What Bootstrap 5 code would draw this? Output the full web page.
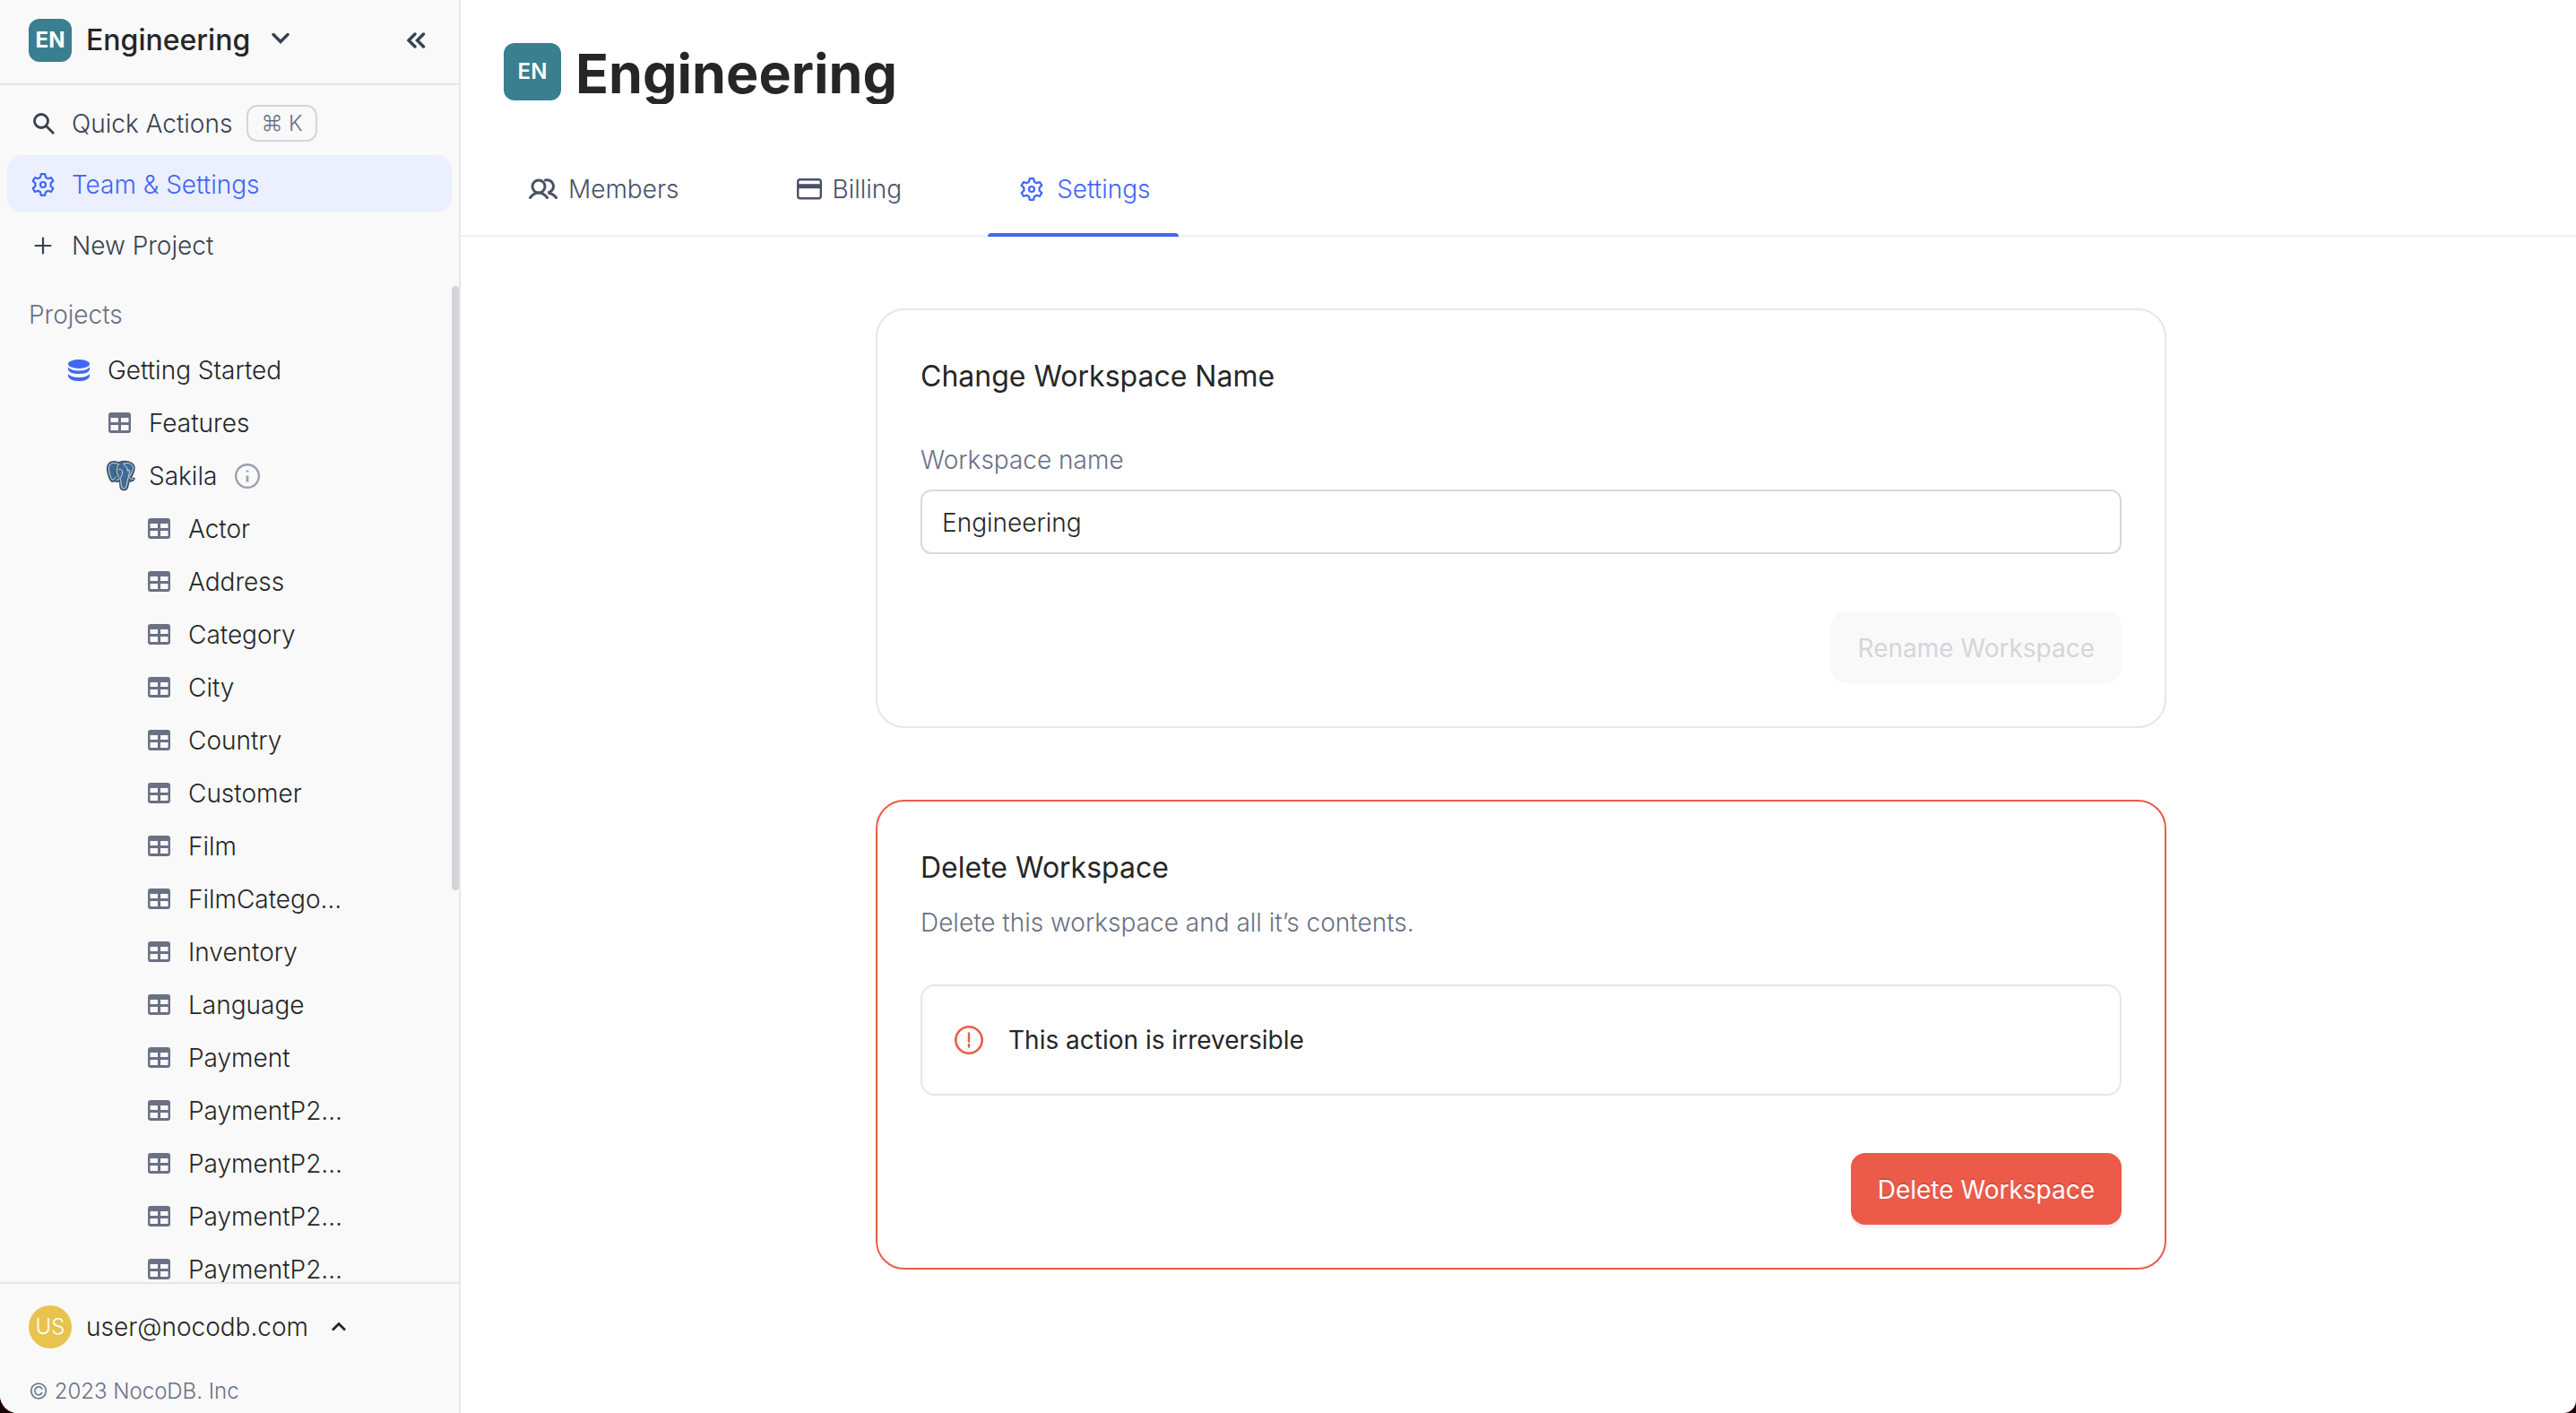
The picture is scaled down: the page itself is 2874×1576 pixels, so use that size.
<!DOCTYPE html>
<html lang="en">
<head>
<meta charset="utf-8">
<meta name="viewport" content="width=device-width, initial-scale=1">
<title>Engineering – Settings</title>
<link href="https://cdn.jsdelivr.net/npm/bootstrap@5.3.0/dist/css/bootstrap.min.css" rel="stylesheet">
<style>
  :root { --ink:#262626; --slate:#374151; --tab:#4a5268; --muted:#6a7184; --brand:#4166f5; --line:#e7e7e9; --danger:#ec5a4a; --teal:#3a7f8f; }
  body { font-family: Inter, "Liberation Sans", sans-serif; font-size: 28px; font-weight: 300; line-height: 44px; color: var(--ink); background: #1c0208; }
  a { text-decoration: none; color: inherit; }
  svg { flex: none; display: block; }
  .app-shell { background: #fff; border-radius: 0 0 14px 20px; overflow: hidden; }
  .side-pane { flex: 0 0 514px; background: #f9f9fa; border-right: 2px solid var(--line); }
  .side-head { height: 95px; padding: 0 32px 3px; border-bottom: 2px solid var(--line); }
  .plain-btn { background: none; border: 0; padding: 0; color: inherit; text-align: left; font-weight: inherit; }
  .tag-sq { width: 48px; height: 48px; border-radius: 12px; background: var(--teal); color: #fff; font-size: 24px; font-weight: 700; flex: none; }
  .tag-lg { width: 64px; height: 64px; font-weight: 600; }
  .tag-round { width: 48px; height: 48px; border-radius: 50%; background: #e8c34d; color: #fff; font-size: 24px; flex: none; }
  .ws-name { font-size: 32px; font-weight: 500; }
  .side-menu { padding: 10px 8px 14px; gap: 4px; color: var(--slate); }
  .side-link { height: 64px; padding: 1px 0 0 24px; border-radius: 16px; gap: 16px; }
  .side-link svg { width: 32px; }
  .side-link.active { background: #ebeffe; color: var(--brand); }
  .key-hint { height: 41px; padding: 0 14px; border: 2px solid #d5d5d9; border-radius: 12px; font-size: 24px; color: var(--muted); font-family: Inter, "DejaVu Sans", sans-serif; }
  .tree-pane { min-height: 0; flex: 1 1 0; overflow: hidden; }
  .tree-label { height: 64px; padding-left: 32px; color: var(--muted); }
  .tree-row { height: 59px; gap: 20px; white-space: nowrap; }
  .lvl-1 { padding-left: 76px; } .lvl-2 { padding-left: 121px; } .lvl-3 { padding-left: 165px; }
  .src-name { color: #1f293a; }
  .scroll-thumb { position: absolute; right: 0; top: 0; width: 8px; height: 674px; max-height: 100%; background: #d5d5d9; border-radius: 4px; }
  .side-foot { border-top: 2px solid var(--line); padding: 24px 32px 8px; }
  .copy-line { margin-top: 32px; font-size: 24px; line-height: 32px; color: var(--muted); }
  .page-head { padding: 48px 48px 0; gap: 16px; }
  .page-title { font-size: 61px; line-height: 68px; font-weight: 700; overflow: hidden; margin: 0; }
  .page-tabs { margin-top: 44px; padding-left: 40px; gap: 64px; border-bottom: 2px solid #f0f0f0; color: var(--tab); }
  .page-tab { height: 102px; padding: 0 32px; gap: 11px; position: relative; }
  .page-tab.active { color: var(--brand); }
  .page-tab.active::after { content: ""; position: absolute; left: 0; right: 0; bottom: -2px; height: 4px; background: var(--brand); border-radius: 4px 4px 0 0; }
  .page-body { padding: 80px 24px 48px 30px; gap: 80px; }
  .panel { width: 100%; max-width: 1440px; border: 2px solid var(--line); border-radius: 32px; padding: 48px; }
  .panel-danger { border-color: var(--danger); }
  .panel h2 { font-size: 32px; line-height: 48px; font-weight: 400; padding-top: 2px; margin: 0; }
  .field-label { color: var(--muted); margin: 47px 0 11px; display: block; }
  .panel .form-control { height: 72px; font-size: 28px; font-weight: 300; padding: 2px 22px 0; border: 2px solid #d9d9d9; border-radius: 12px; color: var(--ink); }
  .hint-text { margin: 15px 0 47px; color: var(--muted); }
  .warn-box { height: 124px; border: 2px solid var(--line); border-radius: 16px; padding: 0 36px; gap: 28px; font-weight: 400; }
  .act-btn { height: 80px; padding: 2px 30px 0; margin-top: 64px; border: 0; border-radius: 16px; font-size: 28px; font-weight: 400; }
  .act-btn:disabled { background: #f9f9fa; color: #d5d5d9; opacity: 1; }
  .act-danger, .act-danger:hover { background: var(--danger); color: #fff; box-shadow: 0 4px 0 #f3f3f3; text-shadow: 0 -2px 0 rgba(0,0,0,.12); }
</style>
<script src="https://cdn.jsdelivr.net/npm/bootstrap@5.3.0/dist/js/bootstrap.bundle.min.js"></script>
</head>
<body>
<svg width="0" height="0" class="position-absolute" aria-hidden="true">
  <symbol id="gear" viewBox="-13 -13 26 26"><g fill="none" stroke="currentColor" stroke-width="2.2" stroke-linejoin="round"><path d="M-2.2-11.8H2.2L3-8.3 5.6-6.8 9-8 11.3-4.1 8.6-1.6V1.6L11.3 4.1 9 8 5.6 6.8 3 8.3 2.2 11.8H-2.2L-3 8.3-5.6 6.8-9 8-11.3 4.1-8.6 1.6V-1.6L-11.3-4.1-9-8-5.6-6.8-3-8.3Z"/><circle r="3"/></g></symbol>
  <symbol id="grid" viewBox="0 0 25 23"><path fill="#6a7184" fill-rule="evenodd" d="M3 0H22Q25 0 25 3V20Q25 23 22 23H3Q0 23 0 20V3Q0 0 3 0ZM2.500 6V11H11V6ZM14 6V11H22.500V6ZM2.500 14V20H11V14ZM14 14V20H22.500V14Z"/></symbol>
</svg>

<div class="app-shell d-flex vh-100">
  <aside class="side-pane d-flex flex-column">
    <div class="side-head d-flex align-items-center justify-content-between">
      <button class="plain-btn d-flex align-items-center" type="button">
        <span class="tag-sq d-flex align-items-center justify-content-center me-3">EN</span>
        <span class="ws-name">Engineering</span>
        <svg class="ms-4" width="20" height="18" viewBox="0 0 20 18"><path d="M2 2.500 10 10.500 18 2.500" fill="none" stroke="#374151" stroke-width="3.400" stroke-linecap="round"/></svg>
      </button>
      <button class="plain-btn" type="button" aria-label="Collapse sidebar">
        <svg width="26" height="18" viewBox="0 0 26 18"><path d="M9 2 2 9 9 16M18.500 2 11.500 9 18.500 16" fill="none" stroke="#374151" stroke-width="3.400" stroke-linecap="round"/></svg>
      </button>
    </div>

    <nav class="side-menu d-flex flex-column">
      <a href="#" class="side-link d-flex align-items-center">
        <svg height="26" viewBox="0 0 32 26"><g fill="none" stroke="currentColor" stroke-width="2.800"><circle cx="14" cy="10" r="7.500"/><path d="M19.500 15.500 28 24"/></g></svg>
        <span>Quick Actions</span>
        <span class="key-hint d-flex align-items-center">⌘ K</span>
      </a>
      <a href="#" class="side-link active d-flex align-items-center"><svg height="26"><use href="#gear"/></svg><span>Team &amp; Settings</span></a>
      <a href="#" class="side-link d-flex align-items-center">
        <svg height="20" viewBox="0 0 32 20"><path d="M16 1.500V18.500M7.500 10H24.500" stroke="currentColor" stroke-width="2.200" stroke-linecap="round"/></svg>
        <span>New Project</span>
      </a>
    </nav>

    <div class="tree-pane position-relative">
      <div class="tree-label d-flex align-items-center">Projects</div>
      <div class="tree-row lvl-1 d-flex align-items-center">
        <svg width="24" height="26" viewBox="0 0 24 26"><g fill="var(--brand)"><ellipse cx="12" cy="6" rx="12" ry="5"/><path d="M0 9.500Q3 13.500 12 13.500T24 9.500V12.500Q22 17 12 17T0 12.500ZM0 17Q3 21 12 21T24 17V20Q22 25 12 25T0 20Z"/></g></svg>
        <span>Getting Started</span>
      </div>
      <div class="tree-row lvl-2 d-flex align-items-center"><svg width="25" height="23"><use href="#grid"/></svg><span>Features</span></div>
      <div class="tree-row lvl-2 d-flex align-items-center">
        <svg width="25" height="34" viewBox="2 0 25 34" overflow="visible">
          <g fill="#3f6a96" stroke="#44566a" stroke-width="1.600" stroke-linejoin="round">
            <path d="M13 2Q7-.5 3 2.500-.5 6 1 12 2.500 19 5 22.500 7 24.500 9.500 21.500L12 19Z"/>
            <path d="M13 2Q19 0 24 1 31 3 31 8 30.500 14 26.500 19.500L31 19.500Q30.500 22.500 25 23 24 26 23.500 29 22.500 33 18.500 32.500 15 32 15 27L14.500 22Q11.500 24 9 22.500L12 19Q8.500 15 10 9 10.500 4.500 13 2Z"/>
          </g>
          <g fill="none" stroke="#d9e1e8" stroke-width=".9" stroke-linecap="round">
            <path d="M12.500 3.500Q6.500 1 3.800 4 1.500 7 2.800 12 4 18 6 21 7.500 22 11 17.500M13.500 3.500Q10.500 7 11.300 12 12 17 14 18M14 9.500Q18 9 17.500 13 17.500 17 15 19.500 16 22 16.200 27 16.500 31 19 31 22 31 22.200 27L23.500 20Q27.500 15.500 29.500 9 30 4.500 24.500 2.700 21 2 18.500 3.200 23 6.500 24 11.500M23 10.500Q24.500 9.500 25.500 10.500 26 14 24 17.500 26 21 29.500 20.600M11 21.500Q13.500 21.800 14 19.500"/>
          </g>
        </svg>
        <span class="src-name">Sakila</span>
        <svg width="28" height="28" viewBox="0 0 28 28"><circle cx="14" cy="14" r="12.800" fill="none" stroke="#9aa1af" stroke-width="2.400"/><path d="M14 13.500V20.500M14 7.500V9.500" stroke="#9aa1af" stroke-width="2.800"/></svg>
      </div>
      <div class="tree-row lvl-3 d-flex align-items-center"><svg width="25" height="23"><use href="#grid"/></svg><span>Actor</span></div>
      <div class="tree-row lvl-3 d-flex align-items-center"><svg width="25" height="23"><use href="#grid"/></svg><span>Address</span></div>
      <div class="tree-row lvl-3 d-flex align-items-center"><svg width="25" height="23"><use href="#grid"/></svg><span>Category</span></div>
      <div class="tree-row lvl-3 d-flex align-items-center"><svg width="25" height="23"><use href="#grid"/></svg><span>City</span></div>
      <div class="tree-row lvl-3 d-flex align-items-center"><svg width="25" height="23"><use href="#grid"/></svg><span>Country</span></div>
      <div class="tree-row lvl-3 d-flex align-items-center"><svg width="25" height="23"><use href="#grid"/></svg><span>Customer</span></div>
      <div class="tree-row lvl-3 d-flex align-items-center"><svg width="25" height="23"><use href="#grid"/></svg><span>Film</span></div>
      <div class="tree-row lvl-3 d-flex align-items-center"><svg width="25" height="23"><use href="#grid"/></svg><span>FilmCatego…</span></div>
      <div class="tree-row lvl-3 d-flex align-items-center"><svg width="25" height="23"><use href="#grid"/></svg><span>Inventory</span></div>
      <div class="tree-row lvl-3 d-flex align-items-center"><svg width="25" height="23"><use href="#grid"/></svg><span>Language</span></div>
      <div class="tree-row lvl-3 d-flex align-items-center"><svg width="25" height="23"><use href="#grid"/></svg><span>Payment</span></div>
      <div class="tree-row lvl-3 d-flex align-items-center"><svg width="25" height="23"><use href="#grid"/></svg><span>PaymentP2…</span></div>
      <div class="tree-row lvl-3 d-flex align-items-center"><svg width="25" height="23"><use href="#grid"/></svg><span>PaymentP2…</span></div>
      <div class="tree-row lvl-3 d-flex align-items-center"><svg width="25" height="23"><use href="#grid"/></svg><span>PaymentP2…</span></div>
      <div class="tree-row lvl-3 d-flex align-items-center"><svg width="25" height="23"><use href="#grid"/></svg><span>PaymentP2…</span></div>
      <div class="scroll-thumb"></div>
    </div>

    <div class="side-foot">
      <button class="plain-btn d-flex align-items-center" type="button">
        <span class="tag-round d-flex align-items-center justify-content-center me-3">US</span>
        <span>user@nocodb.com</span>
        <svg class="ms-4" width="20" height="12" viewBox="0 0 20 12"><path d="M3 9.500 10 2.500 17 9.500" fill="none" stroke="#262626" stroke-width="2.800"/></svg>
      </button>
      <div class="copy-line">© 2023 NocoDB. Inc</div>
    </div>
  </aside>

  <main class="flex-grow-1 d-flex flex-column">
    <header class="page-head d-flex align-items-start">
      <span class="tag-sq tag-lg d-flex align-items-center justify-content-center">EN</span>
      <h1 class="page-title">Engineering</h1>
    </header>
    <nav class="page-tabs d-flex">
      <a href="#" class="page-tab d-flex align-items-center">
        <svg width="37" height="24" viewBox="-2 0 37 24"><g fill="none" stroke="currentColor" stroke-width="3" stroke-linecap="round"><circle cx="13" cy="9" r="7"/><path d="M3.500 21.500Q7.500 16 13 16T22.500 21.500M20.500 2Q25 1 28 4.500 31 9 28 13 26.500 15 23.500 16 29 17 32.500 21.500"/></g></svg>
        <span>Members</span>
      </a>
      <a href="#" class="page-tab d-flex align-items-center">
        <svg width="32" height="24" viewBox="-4 0 32 24"><rect x="1.200" y="1.200" width="25.600" height="21" rx="2.500" fill="none" stroke="currentColor" stroke-width="2.400"/><path d="M1 8.700H27" stroke="currentColor" stroke-width="5"/></svg>
        <span>Billing</span>
      </a>
      <a href="#" class="page-tab active d-flex align-items-center"><svg width="34" height="26"><use href="#gear"/></svg><span>Settings</span></a>
    </nav>
    <div class="page-body d-flex flex-column align-items-center">
      <section class="panel">
        <h2>Change Workspace Name</h2>
        <label class="field-label" for="wsName">Workspace name</label>
        <input class="form-control" id="wsName" type="text" value="Engineering">
        <div class="d-flex justify-content-end"><button class="btn act-btn" type="button" disabled>Rename Workspace</button></div>
      </section>
      <section class="panel panel-danger">
        <h2>Delete Workspace</h2>
        <p class="hint-text">Delete this workspace and all it’s contents.</p>
        <div class="warn-box d-flex align-items-center">
          <svg width="32" height="32" viewBox="0 0 32 32"><circle cx="16" cy="16" r="14.700" fill="none" stroke="#ec5a4a" stroke-width="2.600"/><path d="M16 8.500V17.500M16 21V23.500" stroke="#ec5a4a" stroke-width="2.400" stroke-linecap="round"/></svg>
          <span>This action is irreversible</span>
        </div>
        <div class="d-flex justify-content-end"><button class="btn act-btn act-danger" type="button">Delete Workspace</button></div>
      </section>
    </div>
  </main>
</div>
</body>
</html>
